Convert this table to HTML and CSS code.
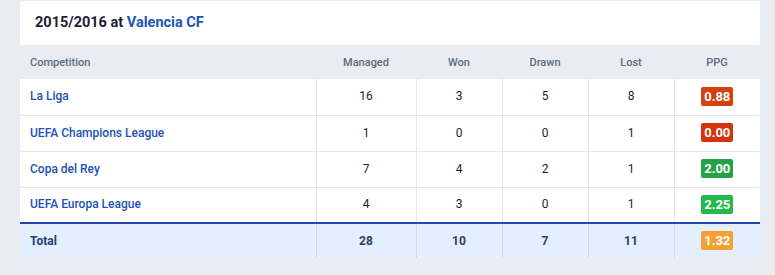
FILE: index.html
```html
<!DOCTYPE html>
<html>
<head>
<meta charset="utf-8">
<link rel="stylesheet" href="styles.css">
</head>
<body>
<div class="card">
  <div class="title">2015/2016 at <a class="club" href="#">Valencia CF</a></div>
  <table class="stats">
    <thead>
      <tr><th class="comp">Competition</th><th class="c-man">Managed</th><th>Won</th><th>Drawn</th><th>Lost</th><th>PPG</th></tr>
    </thead>
    <tbody>
      <tr><td class="comp"><a href="#">La Liga</a></td><td>16</td><td>3</td><td>5</td><td>8</td><td><span class="ppg ppg-a">0.88</span></td></tr>
      <tr><td class="comp"><a href="#">UEFA Champions League</a></td><td>1</td><td>0</td><td>0</td><td>1</td><td><span class="ppg ppg-b">0.00</span></td></tr>
      <tr><td class="comp"><a href="#">Copa del Rey</a></td><td>7</td><td>4</td><td>2</td><td>1</td><td><span class="ppg ppg-c">2.00</span></td></tr>
      <tr><td class="comp"><a href="#">UEFA Europa League</a></td><td>4</td><td>3</td><td>0</td><td>1</td><td><span class="ppg ppg-d">2.25</span></td></tr>
    </tbody>
    <tfoot>
      <tr><td class="comp">Total</td><td>28</td><td>10</td><td>7</td><td>11</td><td><span class="ppg ppg-e">1.32</span></td></tr>
    </tfoot>
  </table>
</div>
</body>
</html>
```
FILE: styles.css
```css
* { box-sizing: border-box; }
html, body { margin: 0; }
body {
  background: #e9edf1;
  padding: 1px 15px 0 20px;
  font-family: Roboto, "Liberation Sans", sans-serif;
  width: 775px;
  height: 275px;
}
.card {
  background: #fff;
  width: 740px;
}
.title {
  height: 44px;
  padding: 12px 15px 0;
  font-size: 14.5px;
  font-weight: 700;
  color: #1b2237;
  line-height: 20px;
}
.club { color: #1a56b9; text-decoration: none; }
.stats {
  width: 740px;
  border-collapse: collapse;
  table-layout: fixed;
}
.stats th {
  background: #e9edf1;
  height: 34px;
  font-size: 11px;
  font-weight: 500;
  color: #5b6b80;
  text-align: center;
  padding: 0;
  width: 86px;
}
.stats th.comp { width: 296px; text-align: left; padding-left: 10px; }
.stats th.c-man { width: 100px; }
.stats td {
  height: 36px;
  font-size: 12px;
  color: #1f1f1f;
  text-align: center;
  padding: 0 0 1px;
  border-bottom: 1px solid #e6e7e9;
  border-left: 1px solid #e6e7e9;
}
.stats td.comp { text-align: left; padding-left: 10px; border-left: none; }
.stats td.comp a { color: #1b52b5; text-decoration: none; font-weight: 500; }
.stats tbody tr:last-child td { border-bottom: 2px solid #2545b3; }
.stats tfoot td {
  background: #e3effc;
  height: 35px;
  border-bottom: none;
  border-left-color: #cfdbe9;
  font-weight: 700;
  color: #28406f;
}
.stats tfoot td.comp { color: #28406f; }
.ppg {
  display: inline-block;
  min-width: 32px;
  height: 19px;
  line-height: 19px;
  padding: 0 3px;
  border-radius: 2px;
  color: #fff;
  font-weight: 700;
  font-size: 13px;
}
.ppg-a { background: #d4410b; }
.ppg-b { background: #d4320c; }
.ppg-c { background: #23a345; }
.ppg-d { background: #23ba4b; }
.ppg-e { background: #f5a033; }
```
